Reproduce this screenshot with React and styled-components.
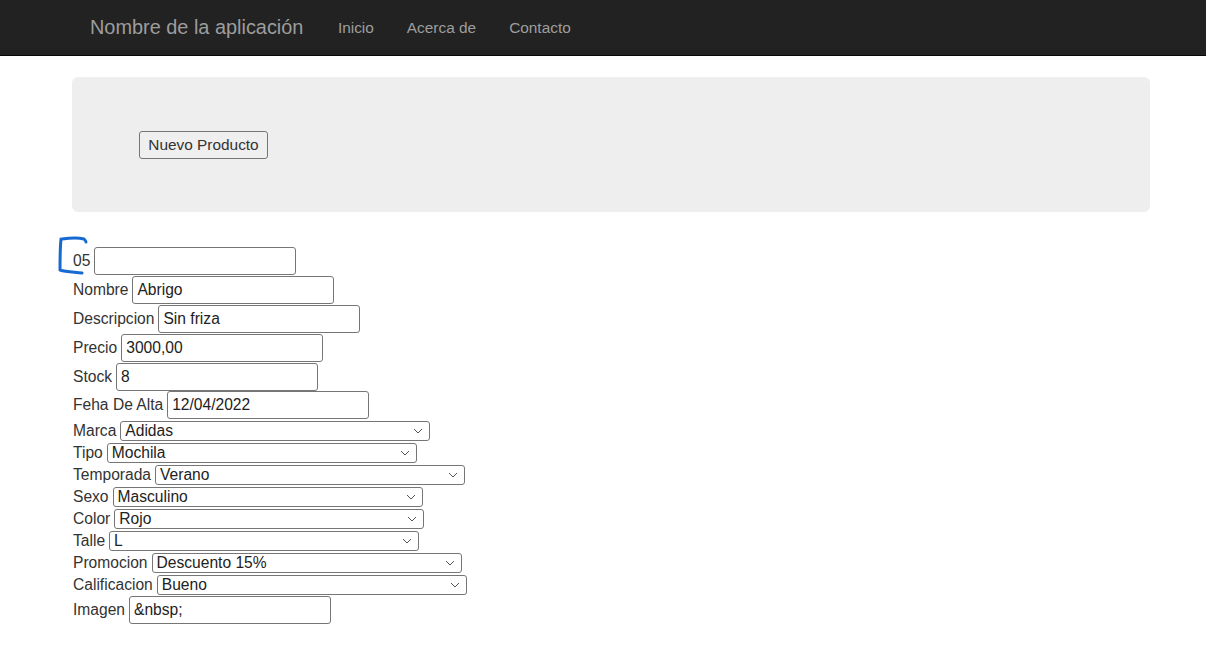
import React from "react";
import styled, { createGlobalStyle } from "styled-components";

const GlobalStyle = createGlobalStyle`
  html, body {
    margin: 0;
    padding: 0;
    background: #fff;
    font-family: "Liberation Sans", Arial, sans-serif;
    font-size: 15.6px;
    color: #333;
  }
`;

const Navbar = styled.nav`
  height: 55px;
  background: #222;
  border-bottom: 1px solid #080808;
  display: flex;
  align-items: center;
  padding-left: 90px;
`;

const Brand = styled.a`
  font-size: 19.9px;
  color: #9d9d9d;
  text-decoration: none;
  margin-right: 18px;
`;

const NavLink = styled.a`
  font-size: 15.4px;
  color: #9d9d9d;
  text-decoration: none;
  padding: 0 16.5px;
`;

const Container = styled.div`
  padding: 0 56px 0 72px;
`;

const Jumbotron = styled.div`
  margin-top: 21px;
  height: 135px;
  background: #eee;
  border-radius: 6px;
  display: flex;
  align-items: center;
  padding-left: 67px;
`;

const Button = styled.button`
  font-family: "Liberation Sans", Arial, sans-serif;
  font-size: 15.4px;
  color: #333;
  height: 28px;
  width: 129px;
  background: #efefef;
  border: 1px solid #767676;
  border-radius: 3px;
  padding: 0;
`;

const Form = styled.form`
  position: relative;
  margin-top: 35px;
  padding-left: 1px;
  display: flex;
  flex-direction: column;
`;

const Row = styled.div`
  display: flex;
  align-items: center;
  height: ${(p) => p.$h}px;
`;

const Label = styled.label`
  margin-right: 4px;
  color: #333;
  font-size: 15.6px;
`;

const TextInput = styled.input`
  box-sizing: border-box;
  width: 202px;
  height: 28px;
  border: 1px solid #767676;
  border-radius: 3px;
  padding: 0 4px;
  font-family: "Liberation Sans", Arial, sans-serif;
  font-size: 15.6px;
  color: #222;
  background: #fff;
`;

const SelectBox = styled.div`
  box-sizing: border-box;
  width: 310px;
  height: 20px;
  border: 1px solid #767676;
  border-radius: 3px;
  display: flex;
  align-items: center;
  justify-content: space-between;
  padding: 0 6px 0 4px;
  font-size: 15.6px;
  color: #222;
  background: #fff;
`;

const Mark = styled.svg`
  position: absolute;
  left: -17px;
  top: -12px;
`;

const fields = [
  { label: "05", value: "", type: "input" },
  { label: "Nombre", value: "Abrigo", type: "input" },
  { label: "Descripcion", value: "Sin friza", type: "input" },
  { label: "Precio", value: "3000,00", type: "input" },
  { label: "Stock", value: "8", type: "input" },
  { label: "Feha De Alta", value: "12/04/2022", type: "input" },
  { label: "Marca", value: "Adidas", type: "select" },
  { label: "Tipo", value: "Mochila", type: "select" },
  { label: "Temporada", value: "Verano", type: "select" },
  { label: "Sexo", value: "Masculino", type: "select" },
  { label: "Color", value: "Rojo", type: "select" },
  { label: "Talle", value: "L", type: "select" },
  { label: "Promocion", value: "Descuento 15%", type: "select" },
  { label: "Calificacion", value: "Bueno", type: "select" },
  { label: "Imagen", value: "&nbsp;", type: "input" },
];

function Chevron() {
  return (
    <svg width="10" height="6" viewBox="0 0 10 6">
      <path d="M1 1 L5 5 L9 1" fill="none" stroke="#555" strokeWidth="1" />
    </svg>
  );
}

export default function App() {
  return (
    <>
      <GlobalStyle />
      <Navbar>
        <Brand href="#">Nombre de la aplicación</Brand>
        <NavLink href="#">Inicio</NavLink>
        <NavLink href="#">Acerca de</NavLink>
        <NavLink href="#">Contacto</NavLink>
      </Navbar>
      <Container>
        <Jumbotron>
          <Button type="button">Nuevo Producto</Button>
        </Jumbotron>
        <Form>
          <Mark width="36" height="42" viewBox="0 0 36 42">
            <path
              d="M7 4 C14 3 22 2 29 4 C30 5 31 6 31 7 M6 4 C5 14 5 24 5 35 C11 37 19 37 27 38"
              fill="none"
              stroke="#1769d2"
              strokeWidth="3"
              strokeLinecap="round"
              strokeLinejoin="round"
            />
          </Mark>
          {fields.map((f) => (
            <Row key={f.label} $h={f.type === "input" ? 28.8 : 22}>
              <Label>{f.label}</Label>
              {f.type === "input" ? (
                <TextInput defaultValue={f.value} />
              ) : (
                <SelectBox>
                  <span>{f.value}</span>
                  <Chevron />
                </SelectBox>
              )}
            </Row>
          ))}
        </Form>
      </Container>
    </>
  );
}
